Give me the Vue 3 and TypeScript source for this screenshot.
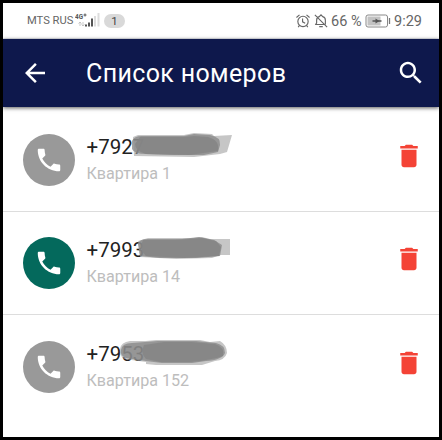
<script setup lang="ts">
interface Contact {
  prefix: string
  place: string
  active: boolean
  light: string
  mid: string
  dark: string
}

const contacts: Contact[] = [
  {
    prefix: '+7927',
    place: 'Квартира 1',
    active: false,
    light: 'M47 4L52 2H98L108 0 126 1 128 3 146 2 141 19 134 21 108 24 48 23Z',
    mid: 'M46 8Q48 3 56 3H98L108 1 124 2Q135 4 134 12L132 19 118 22 88 22 60 21Q48 21 46 16Z',
    dark: 'M54 4L98 4 108 3 122 4Q134 7 132 18L104 22 60 21Q49 18 49 11Z',
  },
  {
    prefix: '+7993',
    place: 'Квартира 14',
    active: true,
    light: 'M52 5L62 2H108L116 1 124 3H144V19H134L126 22 90 23 54 21Z',
    mid: 'M52 8Q53 3 62 3L96 3 113 1 128 4 136 9 134 20 110 22 74 22 54 20Z',
    dark: 'M57 4L90 4 116 2 130 5 135 11 133 20 98 22 60 20Q52 13 57 4Z',
  },
  {
    prefix: '+7953',
    place: 'Квартира 152',
    active: false,
    light: 'M34 9Q35 2 44 1L60 1 70 0H114L124 2 134 1Q141 5 141 13 139 20 129 21L116 25H70L60 24V22L38 19Q33 15 34 9Z',
    mid: 'M35 10Q36 3 46 3L72 1 110 1 130 3Q139 5 139 13 136 20 120 21L106 23H76L60 21 40 18Q34 16 35 10Z',
    dark: 'M58 5L78 2 106 2 129 4Q139 7 137 16 126 20 104 22L74 22 60 19Q54 13 58 5Z',
  },
]
</script>

<template>
  <main class="screen">
    <div class="status">
      <span class="carrier">MTS RUS</span>
      <svg class="signal" viewBox="0 0 25 17" width="25" height="17">
        <text x="0" y="7" class="network" textLength="8" lengthAdjust="spacingAndGlyphs">4G</text>
        <path d="M8.500 3h3M10 1.500v3" stroke="#555" fill="none" />
        <path d="M5 10v4M3.500 11.500L5 10l1.500 1.500M8 10v4M6.500 12.500L8 14l1.500-1.500" stroke="#bbb" stroke-width=".8" fill="none" />
        <path d="M10 12.500h2v2h-2zM13 10.500h2v4h-2zM16 6.500h2v8h-2z" fill="#555" />
        <path d="M19 4h2v10.500h-2zM22.500 1h2v13.500h-2z" fill="#ddd" />
      </svg>
      <span class="badge">1</span>
      <span class="spacer"></span>
      <svg class="alarm" viewBox="0 0 16 16" width="14" height="14" fill="none" stroke="#666" stroke-width="1.300">
        <circle cx="8" cy="8.500" r="5.900" /><path d="M7.500 5v4l3 1.500M.5 4l3.500-3M15.500 4L12 1M4 13l-1.500 2M12 13l1.500 2" />
      </svg>
      <svg class="bell" viewBox="0 0 16 16" width="14" height="14" fill="none" stroke="#666" stroke-width="1.300">
        <path d="M13 12H2l1-2V7c0-2 1-3.500 3-4l2-2 2 2c2 .5 3 2 3 4v5M6 14.500h4M1 1l14 14" />
      </svg>
      <span class="percent">66 %</span>
      <svg class="battery" viewBox="0 0 26 14" width="26" height="14">
        <rect x="1" y="1" width="21.500" height="12" rx="2" fill="#fff" stroke="#888" />
        <rect x="2.500" y="2.500" width="13" height="9" fill="#c2c2c2" />
        <path d="M7.500 7h9" stroke="#555" stroke-width="1.500" /><path d="M10.500 4.500L14.500 7l-4 2.500z" fill="#555" />
        <path d="M24.500 4v6" stroke="#777" stroke-width="1.300" />
      </svg>
      <span class="time">9:29</span>
    </div>

    <header class="bar">
      <svg class="back" viewBox="0 0 24 24" width="30" height="30" fill="#fff"><path d="M20 11H7.830l5.590-5.590L12 4l-8 8 8 8 1.410-1.410L7.830 13H20v-2z" /></svg>
      <h1>Список номеров</h1>
      <svg class="search" viewBox="0 0 24 24" width="30" height="30" fill="#fff"><path d="M15.500 14h-.79l-.28-.27C15.410 12.590 16 11.110 16 9.500 16 5.910 13.090 3 9.500 3S3 5.910 3 9.500 5.910 16 9.500 16c1.610 0 3.090-.59 4.230-1.570l.27.28v.79l5 4.990L20.490 19l-4.990-5zm-6 0C7.010 14 5 11.990 5 9.500S7.010 5 9.500 5 14 7.010 14 9.500 11.990 14 9.500 14z" /></svg>
    </header>

    <ul class="list">
      <li v-for="contact in contacts" :key="contact.place" class="row">
        <span class="avatar" :class="{ active: contact.active }">
          <svg viewBox="0 0 24 24" width="30" height="30" fill="#fff"><path d="M6.620 10.790c1.440 2.830 3.760 5.140 6.590 6.590l2.200-2.200c.27-.27.67-.36 1.020-.24 1.120.37 2.330.57 3.570.57.55 0 1 .45 1 1V20c0 .55-.45 1-1 1-9.390 0-17-7.610-17-17 0-.55.45-1 1-1h3.500c.55 0 1 .45 1 1 0 1.250.2 2.450.57 3.570.11.35.03.74-.25 1.020l-2.200 2.200z" /></svg>
        </span>
        <div class="details">
          <div class="number">
            {{ contact.prefix }}
            <svg class="mask" viewBox="0 0 150 28" width="150" height="28">
              <path :d="contact.light" fill="#a0a0a0" fill-opacity=".6" />
              <path :d="contact.mid" fill="#868686" fill-opacity=".75" />
              <path :d="contact.dark" fill="#858585" fill-opacity=".85" />
            </svg>
          </div>
          <div class="place">{{ contact.place }}</div>
        </div>
        <svg class="trash" viewBox="0 0 24 24" width="30" height="30" fill="#f44336"><path d="M6 19c0 1.100.9 2 2 2h8c1.100 0 2-.9 2-2V7H6v12zM19 4h-3.500l-1-1h-5l-1 1H5v2h14V4z" /></svg>
      </li>
    </ul>
  </main>
</template>

<style>
body { margin: 0; }
</style>

<style scoped>
.screen {
  box-sizing: border-box;
  width: 442px;
  height: 440px;
  border: 3px solid #000;
  background: #fff;
  font-family: Roboto, "Liberation Sans", sans-serif;
  overflow: hidden;
}
.status {
  box-sizing: border-box;
  display: flex;
  align-items: center;
  height: 36px;
  padding: 0 15px 0 24px;
  border-bottom: 1px solid #e8eaf0;
  color: #666;
}
.carrier { width: 48px; font-size: 11.2px; white-space: nowrap; }
.signal { margin-top: -1px; }
.network { font-size: 7.5px; font-weight: 700; fill: #555; }
.badge {
  width: 21px;
  height: 14px;
  margin-left: 4px;
  border-radius: 7px;
  background: #d9d9d9;
  color: #444;
  font-size: 11.5px;
  line-height: 14px;
  text-align: center;
}
.spacer { flex: 1; }
.bell { margin-left: 4px; }
.percent { width: 31px; margin-left: 3px; font-size: 14.5px; line-height: 18px; padding-top: 2px; white-space: nowrap; }
.battery { margin-left: 3px; }
.time { width: 30px; margin-left: 3px; font-size: 14.5px; line-height: 18px; padding-top: 2px; }
.bar {
  display: flex;
  align-items: center;
  height: 68px;
  padding: 0 14px 0 17px;
  background: #0e184c;
  box-shadow: 0 1px 4px rgba(0, 0, 0, 0.65);
}
h1 {
  flex: 1;
  margin: 2px 0 0 36px;
  color: #fff;
  font-size: 25px;
  font-weight: 400;
  line-height: 30px;
  letter-spacing: 0.36px;
}
.search { margin-right: -1px; }
.list { margin: 0; padding: 1px 0 0; list-style: none; }
.row {
  box-sizing: border-box;
  display: flex;
  align-items: center;
  height: 103.5px;
  padding: 1px 15.5px 0 19.5px;
  border-bottom: 1px solid #ddd;
}
.row:last-child { border-bottom-color: transparent; }
.avatar {
  display: flex;
  align-items: center;
  justify-content: center;
  width: 52px;
  height: 52px;
  border-radius: 50%;
  background: #999;
}
.avatar.active { background: #04695c; }
.details { flex: 1; margin-left: 12px; }
.number {
  position: relative;
  color: #222;
  font-size: 20.5px;
  line-height: 28px;
}
.mask { position: absolute; left: -1px; top: 0; }
.place { color: #bdbdbd; font-size: 16.1px; line-height: 26px; }
.trash { margin-top: -8px; }
</style>
